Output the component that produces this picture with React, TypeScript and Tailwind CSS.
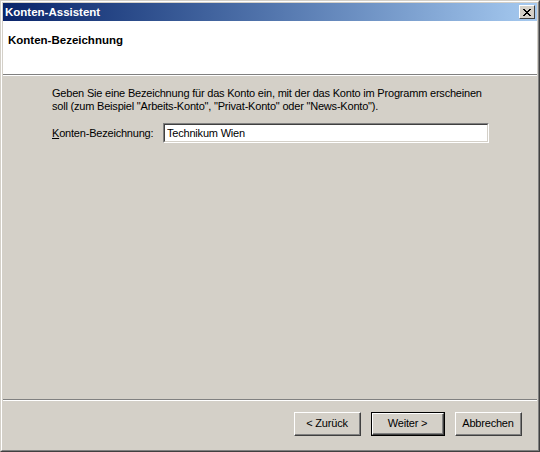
import { useState } from "react";

const FONT = "font-['Tahoma','Liberation_Sans',sans-serif]";

function ClassicButton({ label, isDefault = false }: { label: string; isDefault?: boolean }) {
  const inner = (
    <div className="flex h-full w-full items-center justify-center border-b border-l border-r border-t border-b-[#404040] border-l-white border-r-[#404040] border-t-white bg-[#d4d0c8]">
      <div className="flex h-full w-full items-center justify-center border-b border-r border-b-[#808080] border-r-[#808080] text-[11px] leading-[13px] tracking-[-0.2px] text-black">
        {label}
      </div>
    </div>
  );
  if (isDefault) {
    return <div className="h-[24px] w-[74px] border border-black">{inner}</div>;
  }
  return <div className="h-[24px] w-[67px]">{inner}</div>;
}

export default function App() {
  const [name, setName] = useState("Technikum Wien");

  return (
    <div className={`h-[452px] w-[540px] ${FONT} select-none`}>
      {/* Window frame */}
      <div className="h-full w-full border-b border-l border-r border-t border-b-[#404040] border-l-[#d4d0c8] border-r-[#404040] border-t-[#d4d0c8]">
        <div className="flex h-full w-full flex-col border-b border-l border-r border-t border-b-[#808080] border-l-white border-r-[#808080] border-t-white bg-[#d4d0c8] p-px">
          {/* Title bar */}
          <div className="flex h-[18px] shrink-0 items-center justify-between bg-gradient-to-r from-[#0a246a] to-[#a6caf0] pl-[2px] pr-[2px] text-[11.5px] leading-[13px]">
            <span className="font-bold text-white">Konten-Assistent</span>
            <div className="flex h-[14px] w-[16px] items-center justify-center border-b border-l border-r border-t border-b-[#404040] border-l-white border-r-[#404040] border-t-white bg-[#d4d0c8]">
              <svg width="8" height="7" viewBox="0 0 8 7" shapeRendering="crispEdges">
                <path d="M0 0h2v1H0zM6 0h2v1H6zM1 1h2v1H1zM5 1h2v1H5zM2 2h4v1H2zM3 3h2v1H3zM2 4h4v1H2zM1 5h2v1H1zM5 5h2v1H5zM0 6h2v1H0zM6 6h2v1H6z" fill="#000" />
              </svg>
            </div>
          </div>

          {/* Header */}
          <div className="h-[53px] shrink-0 bg-white pl-[5px] pt-[13px] text-[11.5px] leading-[13px]">
            <span className="font-bold text-black">Konten-Bezeichnung</span>
          </div>
          <div className="h-px shrink-0 bg-[#808080]" />
          <div className="h-px shrink-0 bg-white" />

          {/* Body */}
          <div className="flex flex-1 flex-col pl-[49px] pt-[11px] text-[11px] leading-[13px] tracking-[-0.2px] text-black">
            <p className="whitespace-nowrap">
              Geben Sie eine Bezeichnung für das Konto ein, mit der das Konto im Programm erscheinen
              <br />
              soll (zum Beispiel "Arbeits-Konto", "Privat-Konto" oder "News-Konto").
            </p>
            <div className="mt-[10px] flex items-center">
              <label className="w-[111px] whitespace-nowrap">
                <span className="underline">K</span>onten-Bezeichnung:
              </label>
              <div className="h-[20px] w-[326px] border-b border-l border-r border-t border-b-white border-l-[#808080] border-r-white border-t-[#808080]">
                <div className="h-full w-full border-b border-l border-r border-t border-b-[#d4d0c8] border-l-[#404040] border-r-[#d4d0c8] border-t-[#404040] bg-white">
                  <input
                    value={name}
                    onChange={(e) => setName(e.target.value)}
                    className="block h-full w-full bg-white px-[2px] text-[11px] leading-[16px] tracking-[-0.2px] text-black outline-none"
                  />
                </div>
              </div>
            </div>
          </div>

          {/* Footer separator */}
          <div className="h-px shrink-0 bg-[#808080]" />
          <div className="h-px shrink-0 bg-white" />

          {/* Buttons */}
          <div className="flex h-[48px] shrink-0 items-start justify-end gap-[10px] pr-[15px] pt-[11px]">
            <ClassicButton label="< Zurück" />
            <ClassicButton label="Weiter >" isDefault />
            <ClassicButton label="Abbrechen" />
          </div>
        </div>
      </div>
    </div>
  );
}
